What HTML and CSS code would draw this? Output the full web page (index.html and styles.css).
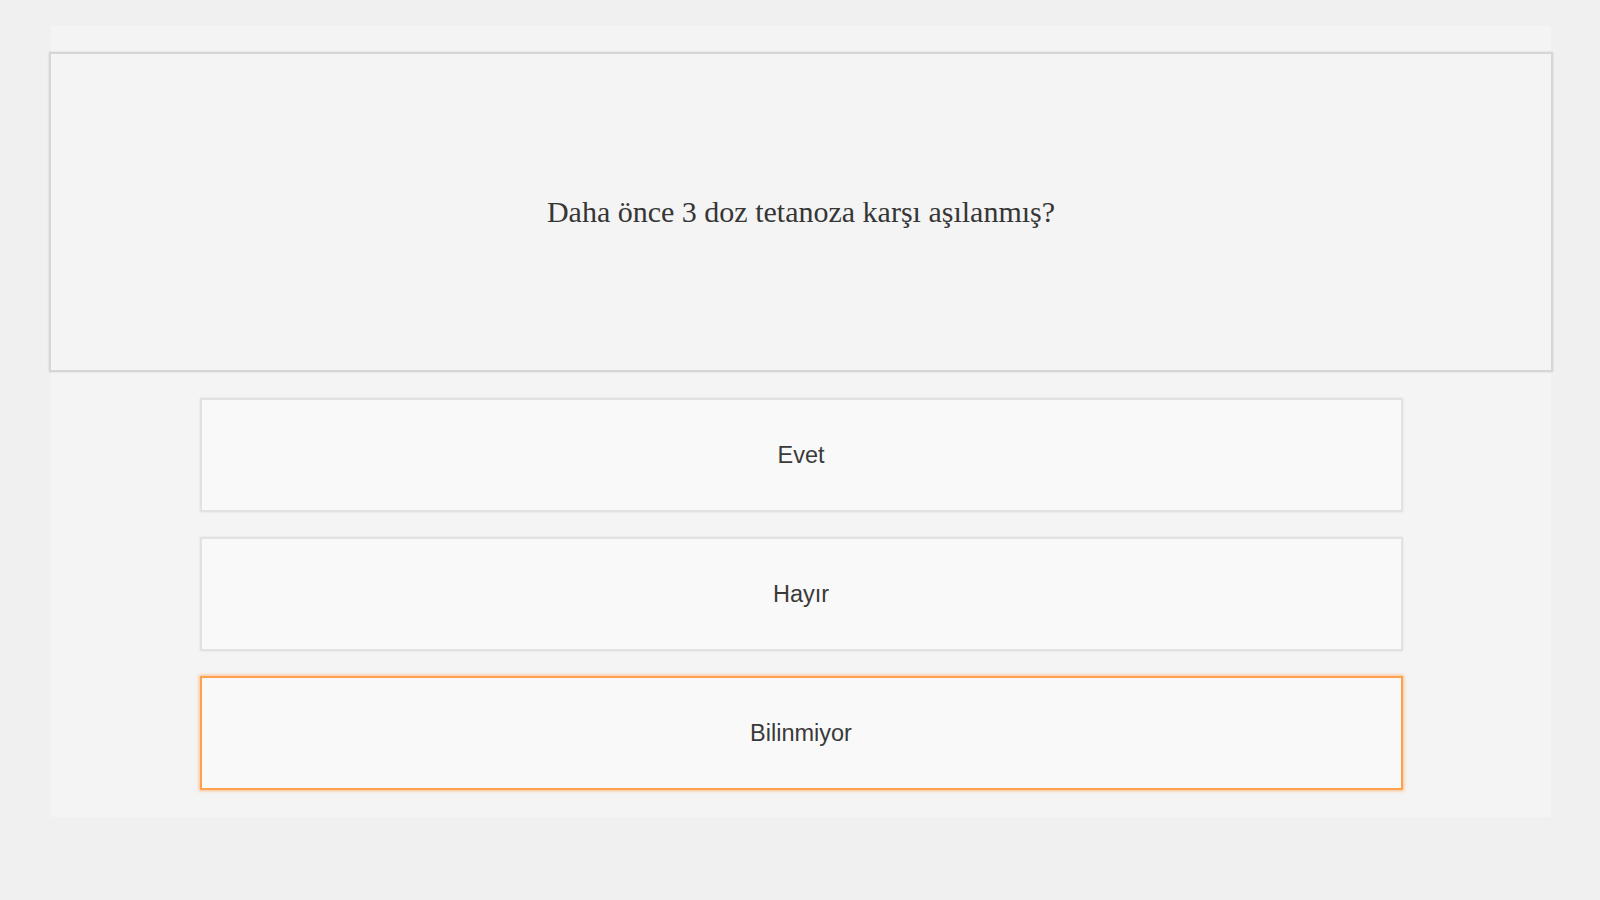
FILE: index.html
```html
<!DOCTYPE html>
<html lang="tr">
<head>
<meta charset="utf-8">
<title>Soru</title>
<link rel="stylesheet" href="styles.css">
</head>
<body>
<div class="panel">
  <div class="question">
    <p class="question-text">Daha önce 3 doz tetanoza karşı aşılanmış?</p>
  </div>
  <div class="options">
    <div class="option">Evet</div>
    <div class="option">Hayır</div>
    <div class="option option-selected">Bilinmiyor</div>
  </div>
</div>
</body>
</html>
```
FILE: styles.css
```css
html, body {
  margin: 0;
  padding: 0;
  background: #f0f0f0;
}
body {
  width: 1600px;
  height: 900px;
  overflow: hidden;
}
.panel {
  width: 1500px;
  margin: 26px 0 0 51px;
  padding: 26px 0 27px;
  background: #f4f4f4;
  box-sizing: border-box;
}
.question {
  margin: 0 -2px;
  height: 320px;
  box-sizing: border-box;
  border: 2px solid #d6d6d6;
  box-shadow: 0 0 2px rgba(0,0,0,0.12);
  background: #f4f4f4;
  display: flex;
  align-items: center;
  justify-content: center;
}
.question-text {
  margin: 0;
  font-family: "Liberation Serif", "Times New Roman", serif;
  font-size: 30px;
  color: #363636;
}
.options {
  display: flex;
  flex-direction: column;
  gap: 25px;
  width: 1203px;
  margin: 26px auto 0;
}
.option {
  height: 114px;
  box-sizing: border-box;
  border: 2px solid #e2e2e2;
  box-shadow: 0 0 2px rgba(0,0,0,0.1);
  background: #f9f9f9;
  display: flex;
  align-items: center;
  justify-content: center;
  font-family: "Liberation Sans", Arial, sans-serif;
  font-size: 23.5px;
  color: #3a3a3a;
}
.option-selected {
  border-color: #ffa04e;
  box-shadow: 0 0 3px 1px rgba(255,150,60,0.55);
}
```
